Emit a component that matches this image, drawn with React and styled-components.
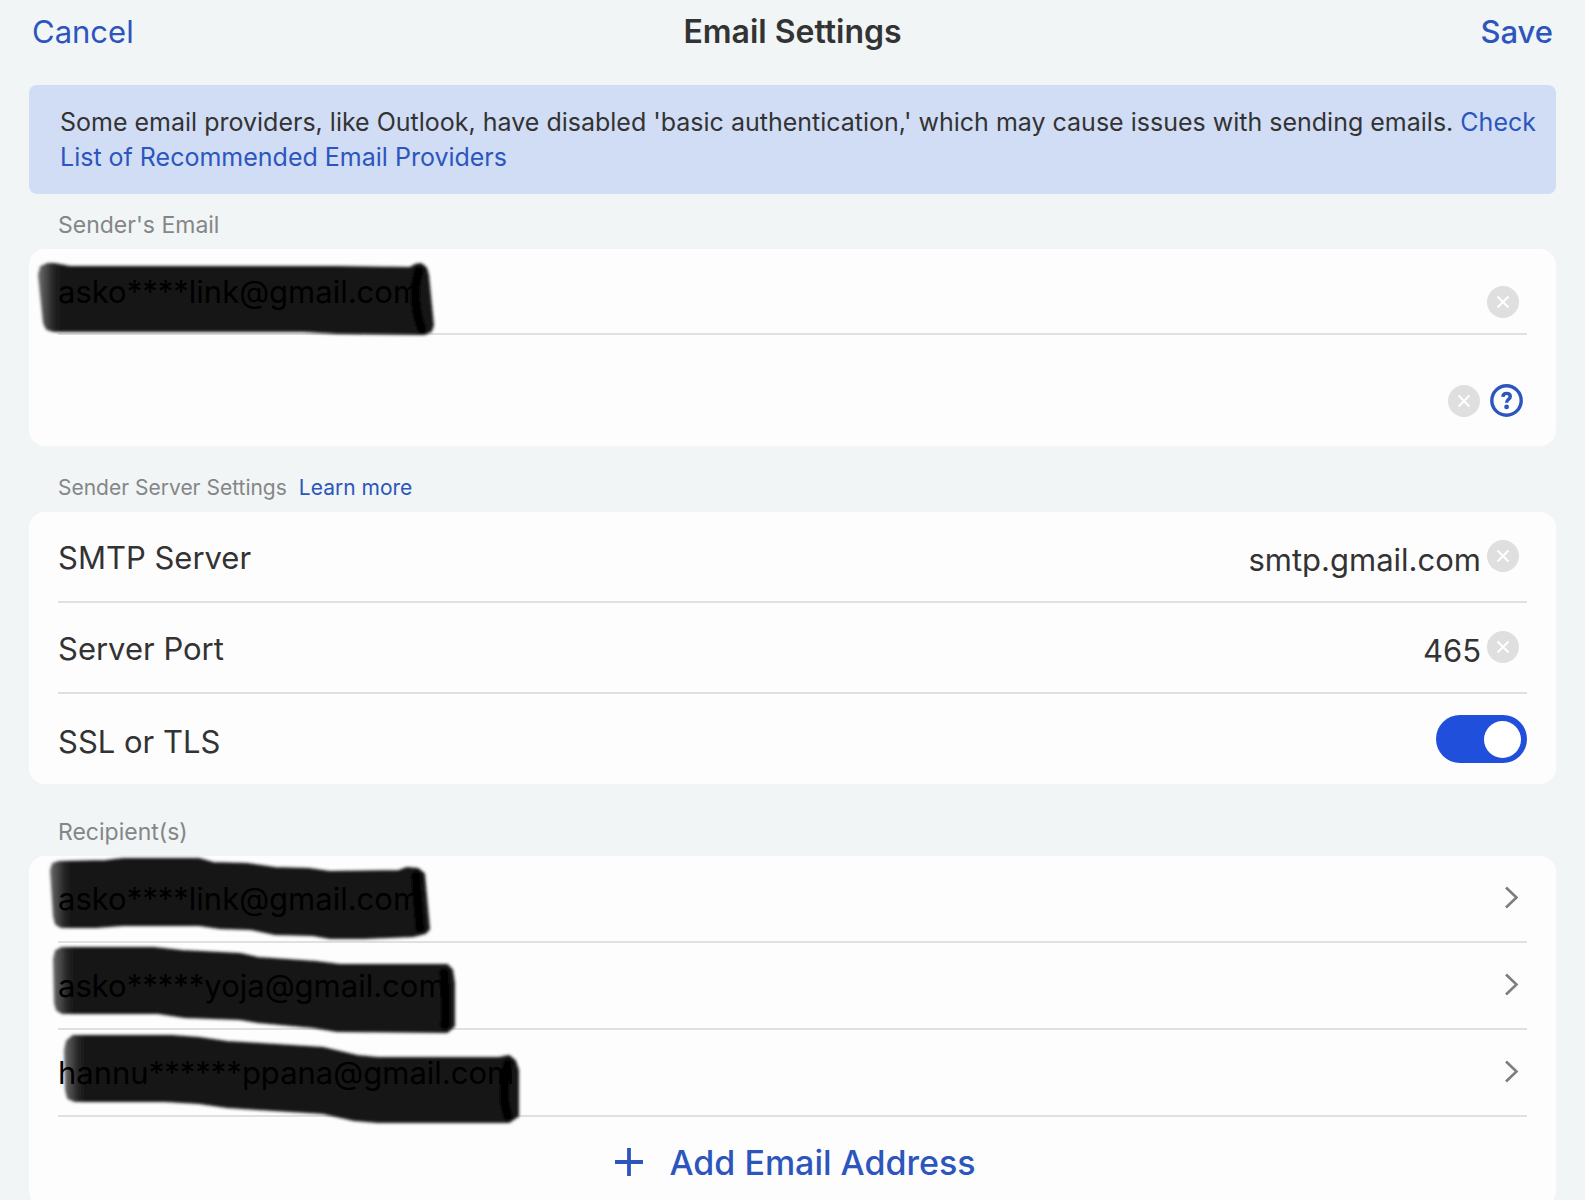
import React, { useId, useState } from 'react';
import styled, { createGlobalStyle } from 'styled-components';

const color = {
  page: '#f1f5f6',
  card: '#fdfdfd',
  banner: '#d1ddf5',
  blue: '#2c56bd',
  toggle: '#1f4fdb',
  text: '#333333',
  muted: '#848688',
  line: '#e0e0e0',
  clear: '#dfdfdf',
};

const GlobalStyle = createGlobalStyle`
  *, *::before, *::after { box-sizing: border-box; }
  body {
    margin: 0;
    background: ${color.page};
    color: ${color.text};
    font-family: Inter, "Liberation Sans", sans-serif;
  }
  button, input { font: inherit; color: inherit; }
`;

const Page = styled.div`
  height: 100vh;
  overflow: hidden auto;
  scrollbar-width: none;
`;

const Header = styled.header`
  display: grid;
  grid-template-columns: 1fr auto 1fr;
  align-items: center;
  height: 85px;
  padding: 0 32px 22px;
`;

const HeaderButton = styled.button`
  justify-self: ${(p) => (p.$end ? 'end' : 'start')};
  padding: 0;
  border: 0;
  background: none;
  color: ${color.blue};
  font-size: 31px;
  font-weight: ${(p) => (p.$end ? 500 : 400)};
  line-height: 40px;
`;

const Title = styled.h1`
  margin: 0;
  font-size: 32px;
  font-weight: 600;
  line-height: 40px;
`;

const Main = styled.main`
  padding: 0 29px 20px;
`;

const Banner = styled.p`
  margin: 0;
  padding: 20px 16px 19px 31px;
  border-radius: 8px;
  background: ${color.banner};
  font-size: 25px;
  line-height: 35px;
`;

const Link = styled.a`
  color: ${color.blue};
  text-decoration: none;
`;

const SectionHeading = styled.div`
  display: flex;
  gap: 12px;
  padding: ${(p) => p.$space}px 29px 10px;
  font-size: ${(p) => (p.$small ? 21 : 23)}px;
  line-height: 28px;
`;

const Heading = styled.h2`
  margin: 0;
  color: ${color.muted};
  font-size: inherit;
  font-weight: 400;
`;

const Card = styled.div`
  padding: 0 29px;
  border-radius: 16px;
  background: ${color.card};
`;

const Row = styled.div`
  position: relative;
  display: flex;
  align-items: center;
  height: ${(p) => p.$height}px;
  border-bottom: ${(p) => (p.$last ? 0 : 2)}px solid ${color.line};
  font-size: 31px;
`;

const SenderRow = styled(Row)`
  align-items: flex-end;
  padding: 0 8px 15px 0;
`;

const PasswordRow = styled(Row)`
  gap: 10px;
  padding: 20px 4px 0 0;
`;

const FieldRow = styled(Row)`
  gap: 6px;
  padding: ${(p) => (p.$flush ? '0' : '0 8px 2px 0')};
`;

const Label = styled.label`
  flex: none;
  padding-top: 4px;
`;

const Input = styled.input`
  position: relative;
  z-index: 1;
  flex: 1;
  min-width: 0;
  padding: 0;
  border: 0;
  outline: 0;
  background: none;
`;

const EmailInput = styled(Input)`
  height: 54px;
  color: #000;
`;

const ValueInput = styled(Input)`
  padding-top: 8px;
  text-align: right;
`;

const IconButton = styled.button`
  display: flex;
  flex: none;
  padding: 0;
  border: 0;
  background: none;
  border-radius: 50%;
`;

const Switch = styled.input`
  appearance: none;
  display: flex;
  align-items: center;
  justify-content: ${(p) => (p.checked ? 'flex-end' : 'flex-start')};
  width: 91px;
  height: 48px;
  margin: 0 0 0 auto;
  padding: 0 6px;
  border-radius: 24px;
  background: ${(p) => (p.checked ? color.toggle : color.clear)};

  &::before {
    content: '';
    width: 37px;
    height: 37px;
    border-radius: 50%;
    background: #fff;
  }
`;

const RecipientButton = styled.button`
  display: flex;
  flex: 1;
  align-items: center;
  justify-content: space-between;
  height: 100%;
  padding: 0 8px 0 0;
  border: 0;
  background: none;
  color: #000;
  text-align: left;
`;

const Address = styled.span`
  position: relative;
  z-index: 1;
`;

const AddButton = styled.button`
  display: flex;
  align-items: center;
  justify-content: center;
  gap: 26px;
  width: 100%;
  height: 90px;
  padding: 0 0 0 6px;
  border: 0;
  background: none;
  color: ${color.blue};
  font-size: 34px;
  font-weight: 500;
`;

const Marker = styled.svg`
  position: absolute;
  top: 0;
  left: 0;
  overflow: visible;
  pointer-events: none;
`;

function MarkerStroke({ points, start, end }) {
  const id = useId();
  return (
    <Marker width="1" height="1" aria-hidden="true">
      <defs>
        <linearGradient id={`${id}g`} gradientUnits="userSpaceOnUse" x1={start} y1="0" x2={start + 24} y2="0">
          <stop offset="0" stopColor="#6a6a6a" />
          <stop offset="0.6" stopColor="#242424" />
          <stop offset="1" stopColor="#131313" />
        </linearGradient>
        <filter id={`${id}b`} x="-10%" y="-20%" width="120%" height="140%">
          <feGaussianBlur stdDeviation="1.6" />
        </filter>
      </defs>
      <g filter={`url(#${id}b)`} strokeLinejoin="round" strokeLinecap="round">
        <polygon points={points} fill={`url(#${id}g)`} stroke={`url(#${id}g)`} strokeWidth="2" />
        <path d={end} fill="none" stroke="#030303" strokeWidth="10" opacity="0.8" />
      </g>
    </Marker>
  );
}

function ClearButton({ label, onClick }) {
  return (
    <IconButton type="button" aria-label={label} onClick={onClick}>
      <svg width="32" height="32" viewBox="0 0 32 32">
        <circle cx="16" cy="16" r="16" fill={color.clear} />
        <path d="M10.5 10.5 21.5 21.5M21.5 10.5 10.5 21.5" stroke="#fff" strokeWidth="2" />
      </svg>
    </IconButton>
  );
}

function HelpIcon() {
  return (
    <svg width="33" height="33" viewBox="0 0 33 33" fill="none">
      <circle cx="16.5" cy="16.5" r="14.7" stroke={color.blue} strokeWidth="3.4" />
      <path
        d="M12.9 12.8C13 10.6 14.5 9.4 16.6 9.4C18.8 9.4 20.3 10.6 20.3 12.6C20.3 15.3 16.6 15.3 16.6 18.7"
        stroke={color.blue}
        strokeWidth="3.4"
      />
      <circle cx="16.6" cy="22.9" r="2.4" fill={color.blue} />
    </svg>
  );
}

function Chevron() {
  return (
    <svg width="15" height="26" viewBox="0 0 15 26" fill="none" aria-hidden="true">
      <path d="M2 1.5 12.5 11.5 2 21.5" stroke="#7d7d7d" strokeWidth="2.6" />
    </svg>
  );
}

const senderStroke = {
  start: -19,
  points:
    '-19,26 -17,18 -10,15 -4,15 12,18 279,18 352,19 357,16 363,15 368,19 370,26 375,76 373,82 366,85 279,84 245,82 -4,82 -11,80 -14,74',
  end: 'M361 22C355 38 357 64 364 80',
};

const recipients = [
  {
    address: 'asko****link@gmail.com',
    start: -8,
    points:
      '-7,14 -5,8 1,6 48,5 65,3 141,3 155,7 189,8 217,12 251,13 272,16 341,15 349,12 360,13 366,18 371,73 367,77 355,80 306,82 272,82 255,79 217,78 193,73 162,72 141,69 65,69 38,71 3,71 -2,68 -4,60',
    end: 'M358 20C359 40 361 58 362 72',
  },
  {
    address: 'asko*****yoja@gmail.com',
    start: -5,
    points:
      '-4,16 -2,8 4,5 96,5 124,8 182,11 200,15 258,19 282,22 379,22 389,22 394,27 396,40 396,83 389,89 279,88 255,84 200,79 182,76 127,74 100,70 4,70 -1,67 -3,60',
    end: 'M386 30C388 50 388 66 387 82',
  },
  {
    address: 'hannu******ppana@gmail.com',
    start: 6,
    points:
      '7,20 9,11 15,6 114,6 141,8 169,12 265,18 299,26 320,28 441,28 451,26 457,31 460,40 460,86 451,92 320,92 296,90 265,83 169,77 141,73 107,71 17,71 10,68 8,60',
    end: 'M450 34C445 52 445 72 450 86',
  },
];

export default function App() {
  const [email, setEmail] = useState('asko****link@gmail.com');
  const [password, setPassword] = useState('');
  const [server, setServer] = useState('smtp.gmail.com');
  const [port, setPort] = useState('465');
  const [secure, setSecure] = useState(true);

  return (
    <Page>
      <GlobalStyle />
      <Header>
        <HeaderButton type="button">Cancel</HeaderButton>
        <Title>Email Settings</Title>
        <HeaderButton type="button" $end>Save</HeaderButton>
      </Header>
      <Main>
        <Banner>
          Some email providers, like Outlook, have disabled 'basic authentication,' which may cause issues with
          sending emails. <Link href="#providers">Check List of Recommended Email Providers</Link>
        </Banner>

        <SectionHeading $space={17}>
          <Heading>Sender's Email</Heading>
        </SectionHeading>
        <Card>
          <SenderRow $height={86}>
            <MarkerStroke {...senderStroke} />
            <EmailInput aria-label="Sender's email" value={email} onChange={(e) => setEmail(e.target.value)} />
            <ClearButton label="Clear email" onClick={() => setEmail('')} />
          </SenderRow>
          <PasswordRow $height={111} $last>
            <Input
              type="password"
              aria-label="Password"
              value={password}
              onChange={(e) => setPassword(e.target.value)}
            />
            <ClearButton label="Clear password" onClick={() => setPassword('')} />
            <IconButton type="button" aria-label="Password help">
              <HelpIcon />
            </IconButton>
          </PasswordRow>
        </Card>

        <SectionHeading $space={28} $small>
          <Heading>Sender Server Settings</Heading>
          <Link href="#learn-more">Learn more</Link>
        </SectionHeading>
        <Card>
          <FieldRow $height={91}>
            <Label htmlFor="server">SMTP Server</Label>
            <ValueInput id="server" value={server} onChange={(e) => setServer(e.target.value)} />
            <ClearButton label="Clear server" onClick={() => setServer('')} />
          </FieldRow>
          <FieldRow $height={91}>
            <Label htmlFor="port">Server Port</Label>
            <ValueInput id="port" value={port} onChange={(e) => setPort(e.target.value)} />
            <ClearButton label="Clear port" onClick={() => setPort('')} />
          </FieldRow>
          <FieldRow $height={90} $last $flush>
            <Label htmlFor="secure">SSL or TLS</Label>
            <Switch
              id="secure"
              type="checkbox"
              role="switch"
              checked={secure}
              onChange={(e) => setSecure(e.target.checked)}
            />
          </FieldRow>
        </Card>

        <SectionHeading $space={34}>
          <Heading>Recipient(s)</Heading>
        </SectionHeading>
        <Card>
          {recipients.map(({ address, ...stroke }) => (
            <Row key={address} $height={87}>
              <MarkerStroke {...stroke} />
              <RecipientButton type="button">
                <Address>{address}</Address>
                <Chevron />
              </RecipientButton>
            </Row>
          ))}
          <AddButton type="button">
            <svg width="28" height="28" viewBox="0 0 28 28" aria-hidden="true">
              <path d="M14 0V28M0 14H28" stroke={color.blue} strokeWidth="3.8" />
            </svg>
            Add Email Address
          </AddButton>
        </Card>
      </Main>
    </Page>
  );
}
